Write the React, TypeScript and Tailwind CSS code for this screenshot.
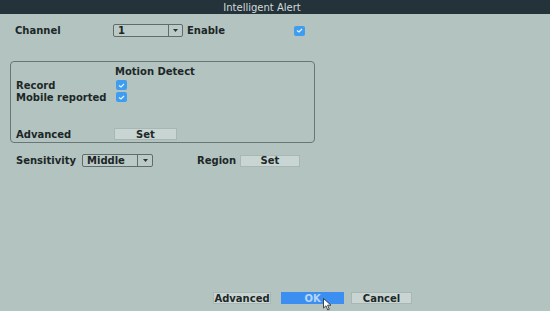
import React from "react";

function Check() {
  return (
    <span className="flex h-[10px] w-[11px] items-center justify-center rounded-[2px] bg-[#3f9df0]">
      <svg width="7" height="5" viewBox="0 0 7 5">
        <path d="M1 2.5 L3 4 L6 1" fill="none" stroke="#e8f4ff" strokeWidth="1.2" />
      </svg>
    </span>
  );
}

function Select({ value, w, arrow }: { value: string; w: string; arrow: string }) {
  return (
    <div className={`flex h-[13px] ${w} items-stretch rounded-[2px] border border-[#5f6c6b] bg-[#bccac7]`}>
      <span className="flex-1 pl-[4px] text-[10px] leading-[11px] font-bold text-[#1b2626]">{value}</span>
      <span className={`flex ${arrow} items-center justify-center border-l border-[#5f6c6b]`}>
        <svg width="5" height="3" viewBox="0 0 5 3">
          <path d="M0 0 L5 0 L2.5 3 Z" fill="#2b3535" />
        </svg>
      </span>
    </div>
  );
}

function Btn({ label, w, blue }: { label: string; w: string; blue?: boolean }) {
  return (
    <div
      className={`flex h-[12px] ${w} items-center justify-center text-[10px] font-bold ${
        blue
          ? "bg-[#3c8ff0] text-[#b8d6f7]"
          : "border border-[#a9b7b4] bg-[#c9d5d2] text-[#1d2828]"
      }`}
    >
      {label}
    </div>
  );
}

export default function App() {
  return (
    <div
      className="relative flex h-[311px] w-[550px] flex-col bg-[#b3c3c0] text-[#1c2727]"
      style={{ fontFamily: '"DejaVu Sans", sans-serif' }}
    >
      <div className="flex h-[14px] items-center justify-center bg-[#24323a] pr-[26px] text-[10px] text-[#d3dadb]">
        Intelligent Alert
      </div>

      <div className="mt-[10px] flex h-[13px] items-center text-[10px] font-bold">
        <span className="w-[113px] pl-[15px]">Channel</span>
        <Select value="1" w="w-[70px]" arrow="w-[14px]" />
        <span className="ml-[4px] w-[107px]">Enable</span>
        <Check />
      </div>

      <div className="ml-[10px] mt-[24px] flex h-[82px] w-[305px] flex-col rounded-[4px] border-[1.5px] border-[#687776] pb-[2px] text-[10px] font-bold">
        <div className="mt-[4px] pl-[104px] leading-[12px]">Motion Detect</div>
        <div className="mt-[1px] flex h-[12px] items-center pl-[5px]">
          <span className="w-[100px]">Record</span>
          <Check />
        </div>
        <div className="flex h-[12px] items-center pl-[5px]">
          <span className="w-[100px]">Mobile reported</span>
          <Check />
        </div>
        <div className="mt-auto flex h-[12px] items-center pl-[5px]">
          <span className="w-[98px]">Advanced</span>
          <Btn label="Set" w="w-[63px]" />
        </div>
      </div>

      <div className="mt-[11px] flex h-[13px] items-center text-[10px] font-bold">
        <span className="w-[82px] pl-[16px]">Sensitivity</span>
        <Select value="Middle" w="w-[71px]" arrow="w-[15px]" />
        <span className="ml-[44px] w-[43px]">Region</span>
        <Btn label="Set" w="w-[60px]" />
      </div>

      <div className="mt-auto mb-[7px] flex items-center pl-[213px]">
        <Btn label="Advanced" w="w-[58px]" />
        <div className="relative ml-[10px]">
          <Btn label="OK" w="w-[63px]" blue />
          <svg className="absolute left-[42px] top-[6px]" width="9" height="13" viewBox="0 0 9 13">
            <path d="M0.5 0.5 L0.5 10 L3 7.8 L4.8 12 L6.3 11.3 L4.6 7.2 L8 7.2 Z" fill="#ffffff" stroke="#222" strokeWidth="0.8" />
          </svg>
        </div>
        <div className="ml-[7px]">
          <Btn label="Cancel" w="w-[61px]" />
        </div>
      </div>
    </div>
  );
}
